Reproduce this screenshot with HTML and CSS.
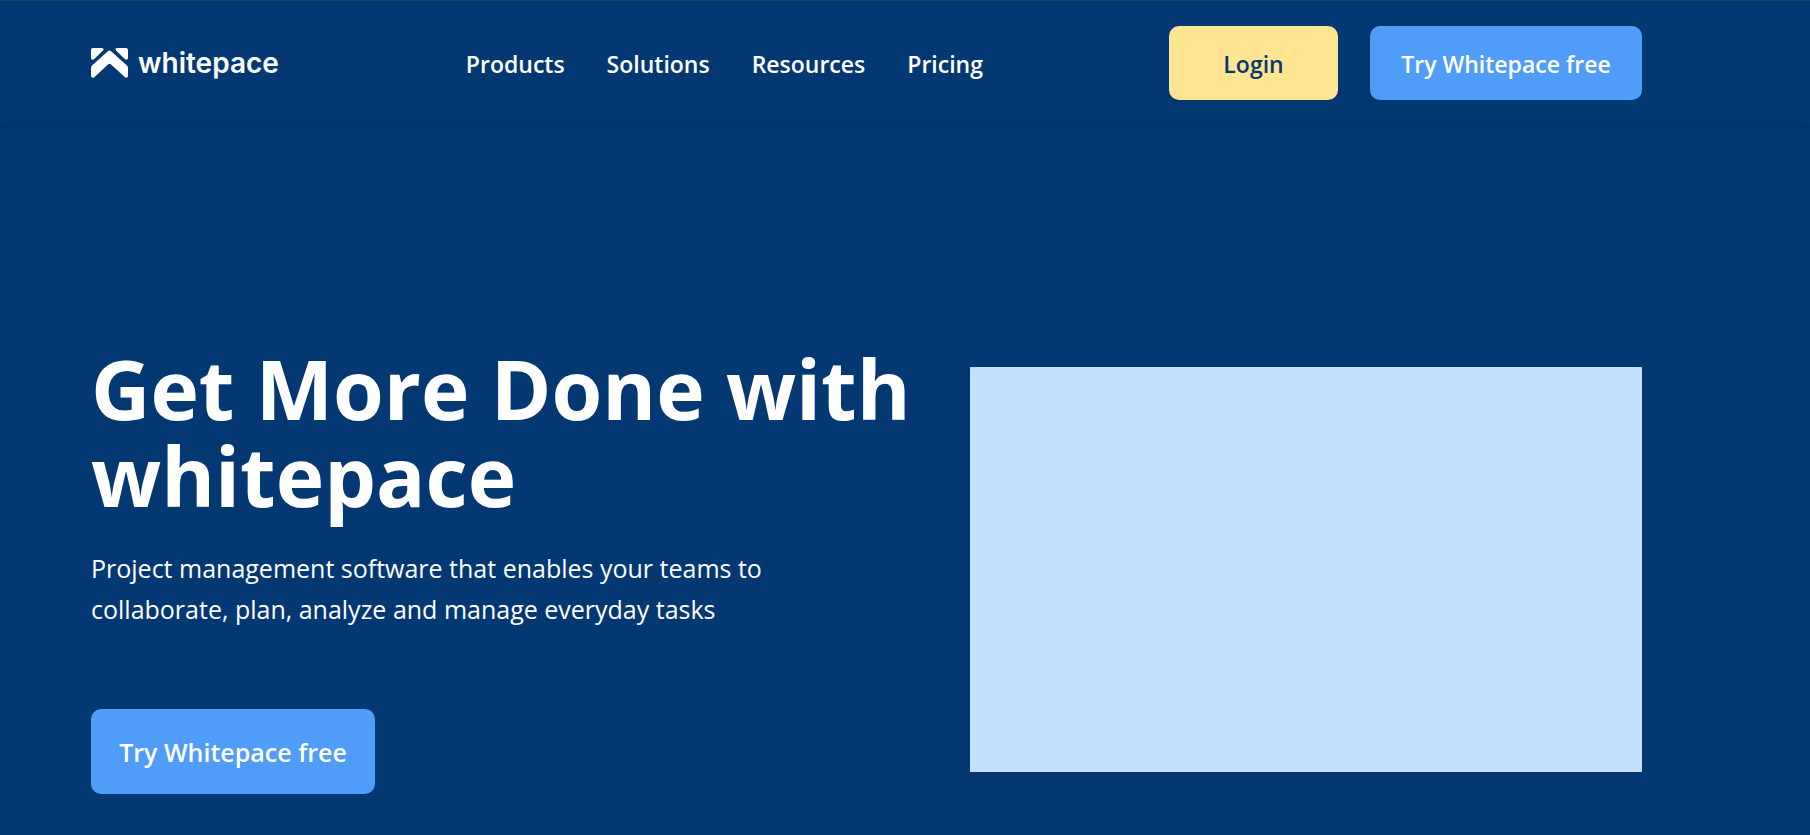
FILE: index.html
```
<!DOCTYPE html>
<html lang="en">
<head>
    <meta charset="UTF-8">
    <meta name="viewport" content="width=device-width, initial-scale=1.0">
    <title>whitepace</title>
    <link rel="stylesheet" href="styles.css">
</head>
<body>
    <header class="navbar">
        <a href="#" class="logo">
            <svg class="logo-icon" viewBox="0 0 37 30" aria-hidden="true">
                <path d="M2 0H10.5Q13.5 0.3 12 2.6L3 11.2Q0.4 12.6 0 10V2Q0 0 2 0Z"/>
                <path d="M35 0H26.5Q23.5 0.3 25 2.6L34 11.2Q36.6 12.6 37 10V2Q37 0 35 0Z"/>
                <path d="M16.6 3.4Q18.5 1.8 20.4 3.4L36 17.6Q37 18.7 37 20V28Q36.6 30.6 34 29.2L20 16.4Q18.5 15.3 17 16.4L3 29.4Q0.4 30.6 0 28V20Q0 18.7 1 17.6Z"/>
            </svg>
            <span>whitepace</span>
        </a>
        <nav class="nav-links">
            <a href="#">Products</a>
            <a href="#">Solutions</a>
            <a href="#">Resources</a>
            <a href="#">Pricing</a>
        </nav>
        <div class="nav-buttons">
            <button type="button" class="btn btn-login">Login</button>
            <button type="button" class="btn btn-try">Try Whitepace free</button>
        </div>
    </header>

    <main class="hero">
        <div class="hero-text">
            <h1>Get More Done with whitepace</h1>
            <p>Project management software that enables your teams to collaborate, plan, analyze and manage everyday tasks</p>
            <button type="button" class="btn btn-hero">Try Whitepace free</button>
        </div>
        <div class="hero-image"></div>
    </main>
</body>
</html>
```
FILE: styles.css
```
* {
    margin: 0;
    padding: 0;
    box-sizing: border-box;
}
body {
    font-family: "Segoe UI", "Open Sans", "Noto Sans", sans-serif;
    background-color: #043873;
    color: #fff;
    border-top: 1px solid #1c3f5e;
}
a {
    color: #fff;
    text-decoration: none;
}

/* Navbar */
.navbar {
    display: flex;
    align-items: center;
    padding: 25px 168px 24px 91px;
    box-shadow: 0 2px 6px rgba(0, 0, 0, 0.12);
}
.logo {
    display: flex;
    align-items: center;
    gap: 10px;
    font-family: Inter, sans-serif;
    font-size: 28px;
    font-weight: 600;
}
.logo-icon {
    width: 37px;
    height: 30px;
    fill: #fff;
}
.nav-links {
    display: flex;
    gap: 42px;
    margin-left: 187px;
    padding-top: 2px;
    font-size: 23px;
    font-weight: 600;
}
.nav-buttons {
    display: flex;
    gap: 32px;
    margin-left: auto;
}
.btn {
    padding-top: 1px;
    border: none;
    border-radius: 10px;
    background-color: #4f9cf9;
    color: #fff;
    font-family: inherit;
    font-size: 23px;
    font-weight: 600;
    white-space: nowrap;
    cursor: pointer;
}
.btn-login {
    width: 169px;
    height: 74px;
    background-color: #ffe492;
    color: #043873;
}
.btn-try {
    width: 272px;
    height: 74px;
}

/* Hero */
.hero {
    display: flex;
    align-items: center;
    justify-content: space-between;
    gap: 40px;
    padding: 221px 168px 40px 91px;
}
.hero-text {
    flex: 1;
}
.hero-text h1 {
    font-size: 82px;
    font-weight: 700;
    line-height: 87px;
}
.hero-text p {
    max-width: 700px;
    margin-top: 29px;
    font-size: 25px;
    line-height: 41px;
}
.btn-hero {
    width: 284px;
    height: 85px;
    margin-top: 79px;
    font-size: 25px;
}
.hero-image {
    flex: 0 1 672px;
    height: 405px;
    background-color: #c4defd;
}
```
